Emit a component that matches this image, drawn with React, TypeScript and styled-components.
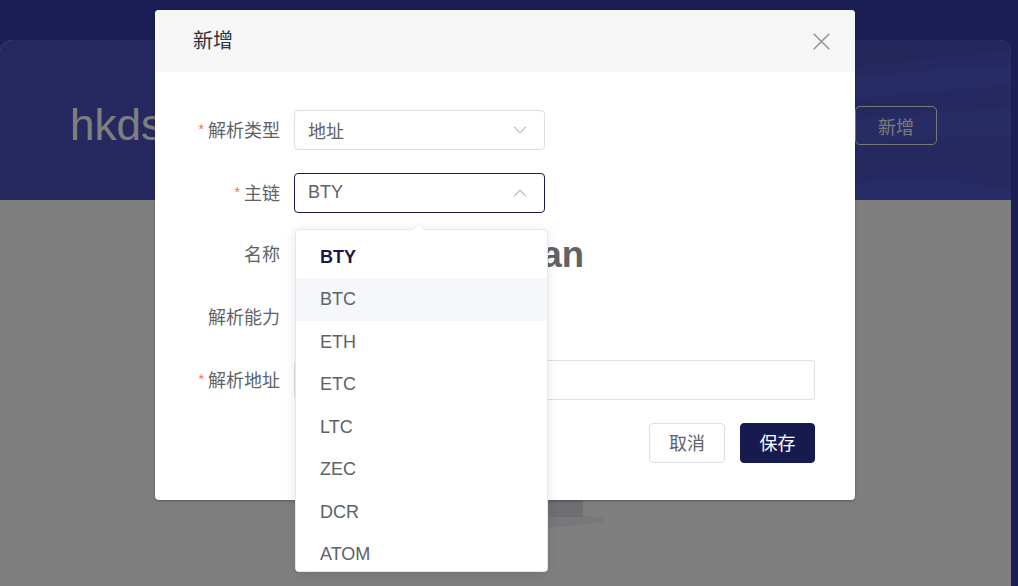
import React from "react";
import styled, { createGlobalStyle } from "styled-components";

const GlobalStyle = createGlobalStyle`
  html, body { margin: 0; padding: 0; }
  body {
    font-family: "Liberation Sans", "Noto Sans CJK SC", sans-serif;
    background: #363ca9;
  }
  * { box-sizing: border-box; }
`;

const Page = styled.div`
  position: relative;
  width: 1018px;
  height: 586px;
  overflow: hidden;
  background: #363ca9;
  padding: 40px 7px 0 0;
  display: flex;
`;

const Card = styled.div`
  flex: 1;
  background: #ffffff;
  border-radius: 12px 12px 0 0;
  overflow: hidden;
  display: flex;
  flex-direction: column;
`;

const Banner = styled.div`
  position: relative;
  height: 160px;
  flex: none;
  background: #4a52c0;
  display: flex;
  align-items: flex-start;
  justify-content: space-between;
  padding: 63px 74px 0 70px;
`;

const BannerWaves = styled.svg`
  position: absolute;
  inset: 0;
  width: 100%;
  height: 100%;
`;

const BannerTitle = styled.div`
  position: relative;
  font-size: 44px;
  line-height: 44px;
  color: #ffffff;
`;

const OutlineButton = styled.div`
  position: relative;
  margin-top: 3px;
  width: 82px;
  height: 39px;
  border: 1px solid #f2f2f5;
  border-radius: 5px;
  color: #f2f2f5;
  font-size: 18px;
  display: flex;
  align-items: center;
  justify-content: center;
`;

const CardBody = styled.div`
  flex: 1;
  display: flex;
  flex-direction: column;
  align-items: center;
  padding-top: 240px;
`;

const Mask = styled.div`
  position: absolute;
  inset: 0;
  background: rgba(0, 0, 0, 0.5);
  padding: 10px 0 0 155px;
`;

const Dialog = styled.div`
  width: 700px;
  background: #ffffff;
  border-radius: 4px;
  box-shadow: 0 1px 3px rgba(0, 0, 0, 0.3);
  overflow: visible;
`;

const DialogHeader = styled.div`
  height: 62px;
  background: #f6f6f6;
  border-radius: 4px 4px 0 0;
  display: flex;
  align-items: center;
  justify-content: space-between;
  padding: 0 25px 0 38px;
`;

const DialogTitle = styled.div`
  font-size: 20px;
  line-height: 24px;
  color: #303133;
`;

const CloseButton = styled.div`
  width: 17px;
  height: 17px;
  display: flex;
`;

const DialogBody = styled.div`
  padding: 38px 40px 37px 40px;
  display: flex;
  flex-direction: column;
  gap: 22.5px;
`;

const FormRow = styled.div<{ $end?: boolean }>`
  display: flex;
  align-items: center;
  height: 40px;
  justify-content: ${(p) => (p.$end ? "flex-end" : "flex-start")};
  gap: ${(p) => (p.$end ? "15px" : "0")};
`;

const Label = styled.div`
  width: 99px;
  flex: none;
  padding-right: 14px;
  text-align: right;
  font-size: 18px;
  line-height: 40px;
  color: #606266;
  white-space: nowrap;
`;

const Required = styled.span`
  color: #f56c6c;
  font-size: 14px;
  margin-right: 4px;
  vertical-align: 3px;
`;

const SelectWrap = styled.div`
  position: relative;
  width: 251px;
  height: 40px;
`;

const SelectBox = styled.div<{ $focus?: boolean }>`
  width: 100%;
  height: 100%;
  border: 1px solid ${(p) => (p.$focus ? "#161a4f" : "#dcdfe6")};
  border-radius: 4px;
  background: #fff;
  display: flex;
  align-items: center;
  justify-content: space-between;
  padding: 0 17px 0 13px;
  font-size: 18px;
  color: #606266;
`;

const Dropdown = styled.div`
  position: absolute;
  top: calc(100% + 16px);
  left: 1px;
  width: 253px;
  background: #fff;
  border: 1px solid #e4e7ed;
  border-radius: 4px;
  box-shadow: 0 2px 12px rgba(0, 0, 0, 0.1);
  z-index: 5;

  &::before,
  &::after {
    content: "";
    position: absolute;
    left: 117px;
    width: 0;
    height: 0;
    border-left: 6px solid transparent;
    border-right: 6px solid transparent;
  }
  &::before {
    top: -7px;
    border-bottom: 6px solid #e4e7ed;
  }
  &::after {
    top: -6px;
    border-bottom: 6px solid #ffffff;
  }
`;

const OptionList = styled.div`
  height: 341px;
  overflow: hidden;
  padding-top: 6px;
`;

const Option = styled.div<{ $selected?: boolean; $hover?: boolean }>`
  height: 42.5px;
  line-height: 42.5px;
  padding: 0 24px;
  font-size: 18px;
  color: ${(p) => (p.$selected ? "#161a4f" : "#606266")};
  font-weight: ${(p) => (p.$selected ? 700 : 400)};
  background: ${(p) => (p.$hover ? "#f5f7fa" : "#ffffff")};
`;

const NameValue = styled.div`
  font-size: 36.5px;
  line-height: 40px;
  font-weight: 700;
  color: #606266;
  white-space: nowrap;
`;

const TextInput = styled.div`
  flex: 1;
  height: 40px;
  border: 1px solid #dcdfe6;
  border-radius: 4px;
  background: #fff;
`;

const Button = styled.div<{ $primary?: boolean; $w: number }>`
  width: ${(p) => p.$w}px;
  height: 40px;
  border-radius: 4px;
  border: 1px solid ${(p) => (p.$primary ? "#161a4f" : "#dcdfe6")};
  background: ${(p) => (p.$primary ? "#161a4f" : "#ffffff")};
  color: ${(p) => (p.$primary ? "#ffffff" : "#606266")};
  font-size: 18px;
  display: flex;
  align-items: center;
  justify-content: center;
  padding-bottom: 1px;
`;

const Chevron = ({ up }: { up?: boolean }) => (
  <svg width="14" height="8" viewBox="0 0 14 8" fill="none">
    <polyline
      points={up ? "1,7.2 7,1.2 13,7.2" : "1,0.8 7,6.8 13,0.8"}
      stroke="#c0c4cc"
      strokeWidth="1.3"
    />
  </svg>
);

const chains = ["BTY", "BTC", "ETH", "ETC", "LTC", "ZEC", "DCR", "ATOM", "BCH", "BNB"];

export default function App() {
  return (
    <>
      <GlobalStyle />
      <Page>
        <Card>
          <Banner>
            <BannerWaves viewBox="0 0 1011 160" preserveAspectRatio="none">
              <path d="M360 160 C 560 60, 780 40, 1011 25 L1011 45 C 800 60, 600 90, 420 160 Z" fill="#5a66e6" opacity="0.35" />
              <path d="M600 160 C 720 90, 880 70, 1011 70 L1011 95 C 880 95, 760 120, 680 160 Z" fill="#5a66e6" opacity="0.3" />
              <path d="M780 160 C 860 135, 940 135, 1011 150 L1011 160 Z" fill="#5a66e6" opacity="0.35" />
              <path d="M500 0 C 640 60, 820 30, 1011 10 L1011 0 Z" fill="#4048b0" opacity="0.4" />
            </BannerWaves>
            <BannerTitle>hkds</BannerTitle>
            <OutlineButton>新增</OutlineButton>
          </Banner>
          <CardBody>
            <svg width="196" height="90" viewBox="0 0 196 90">
              <ellipse cx="98" cy="80" rx="98" ry="8" fill="#f0f1f7" />
              <rect x="40" y="20" width="116" height="57" rx="3" fill="#e8e9f0" />
              <rect x="141" y="60" width="34" height="17" fill="#dcdde6" />
            </svg>
          </CardBody>
        </Card>

        <Mask>
          <Dialog>
            <DialogHeader>
              <DialogTitle>新增</DialogTitle>
              <CloseButton>
                <svg width="17" height="17" viewBox="0 0 17 17">
                  <path d="M0.7 0.7 L16.3 16.3 M16.3 0.7 L0.7 16.3" stroke="#909399" strokeWidth="1.5" />
                </svg>
              </CloseButton>
            </DialogHeader>
            <DialogBody>
              <FormRow>
                <Label>
                  <Required>*</Required>解析类型
                </Label>
                <SelectWrap>
                  <SelectBox>
                    <span>地址</span>
                    <Chevron />
                  </SelectBox>
                </SelectWrap>
              </FormRow>
              <FormRow>
                <Label>
                  <Required>*</Required>主链
                </Label>
                <SelectWrap>
                  <SelectBox $focus>
                    <span>BTY</span>
                    <Chevron up />
                  </SelectBox>
                  <Dropdown>
                    <OptionList>
                      {chains.map((c, i) => (
                        <Option key={c} $selected={i === 0} $hover={i === 1}>
                          {c}
                        </Option>
                      ))}
                    </OptionList>
                  </Dropdown>
                </SelectWrap>
              </FormRow>
              <FormRow>
                <Label>名称</Label>
                <NameValue>hkdstest.bityuan</NameValue>
              </FormRow>
              <FormRow>
                <Label>解析能力</Label>
              </FormRow>
              <FormRow>
                <Label>
                  <Required>*</Required>解析地址
                </Label>
                <TextInput />
              </FormRow>
              <FormRow $end>
                <Button $w={76}>取消</Button>
                <Button $primary $w={75}>保存</Button>
              </FormRow>
            </DialogBody>
          </Dialog>
        </Mask>
      </Page>
    </>
  );
}
